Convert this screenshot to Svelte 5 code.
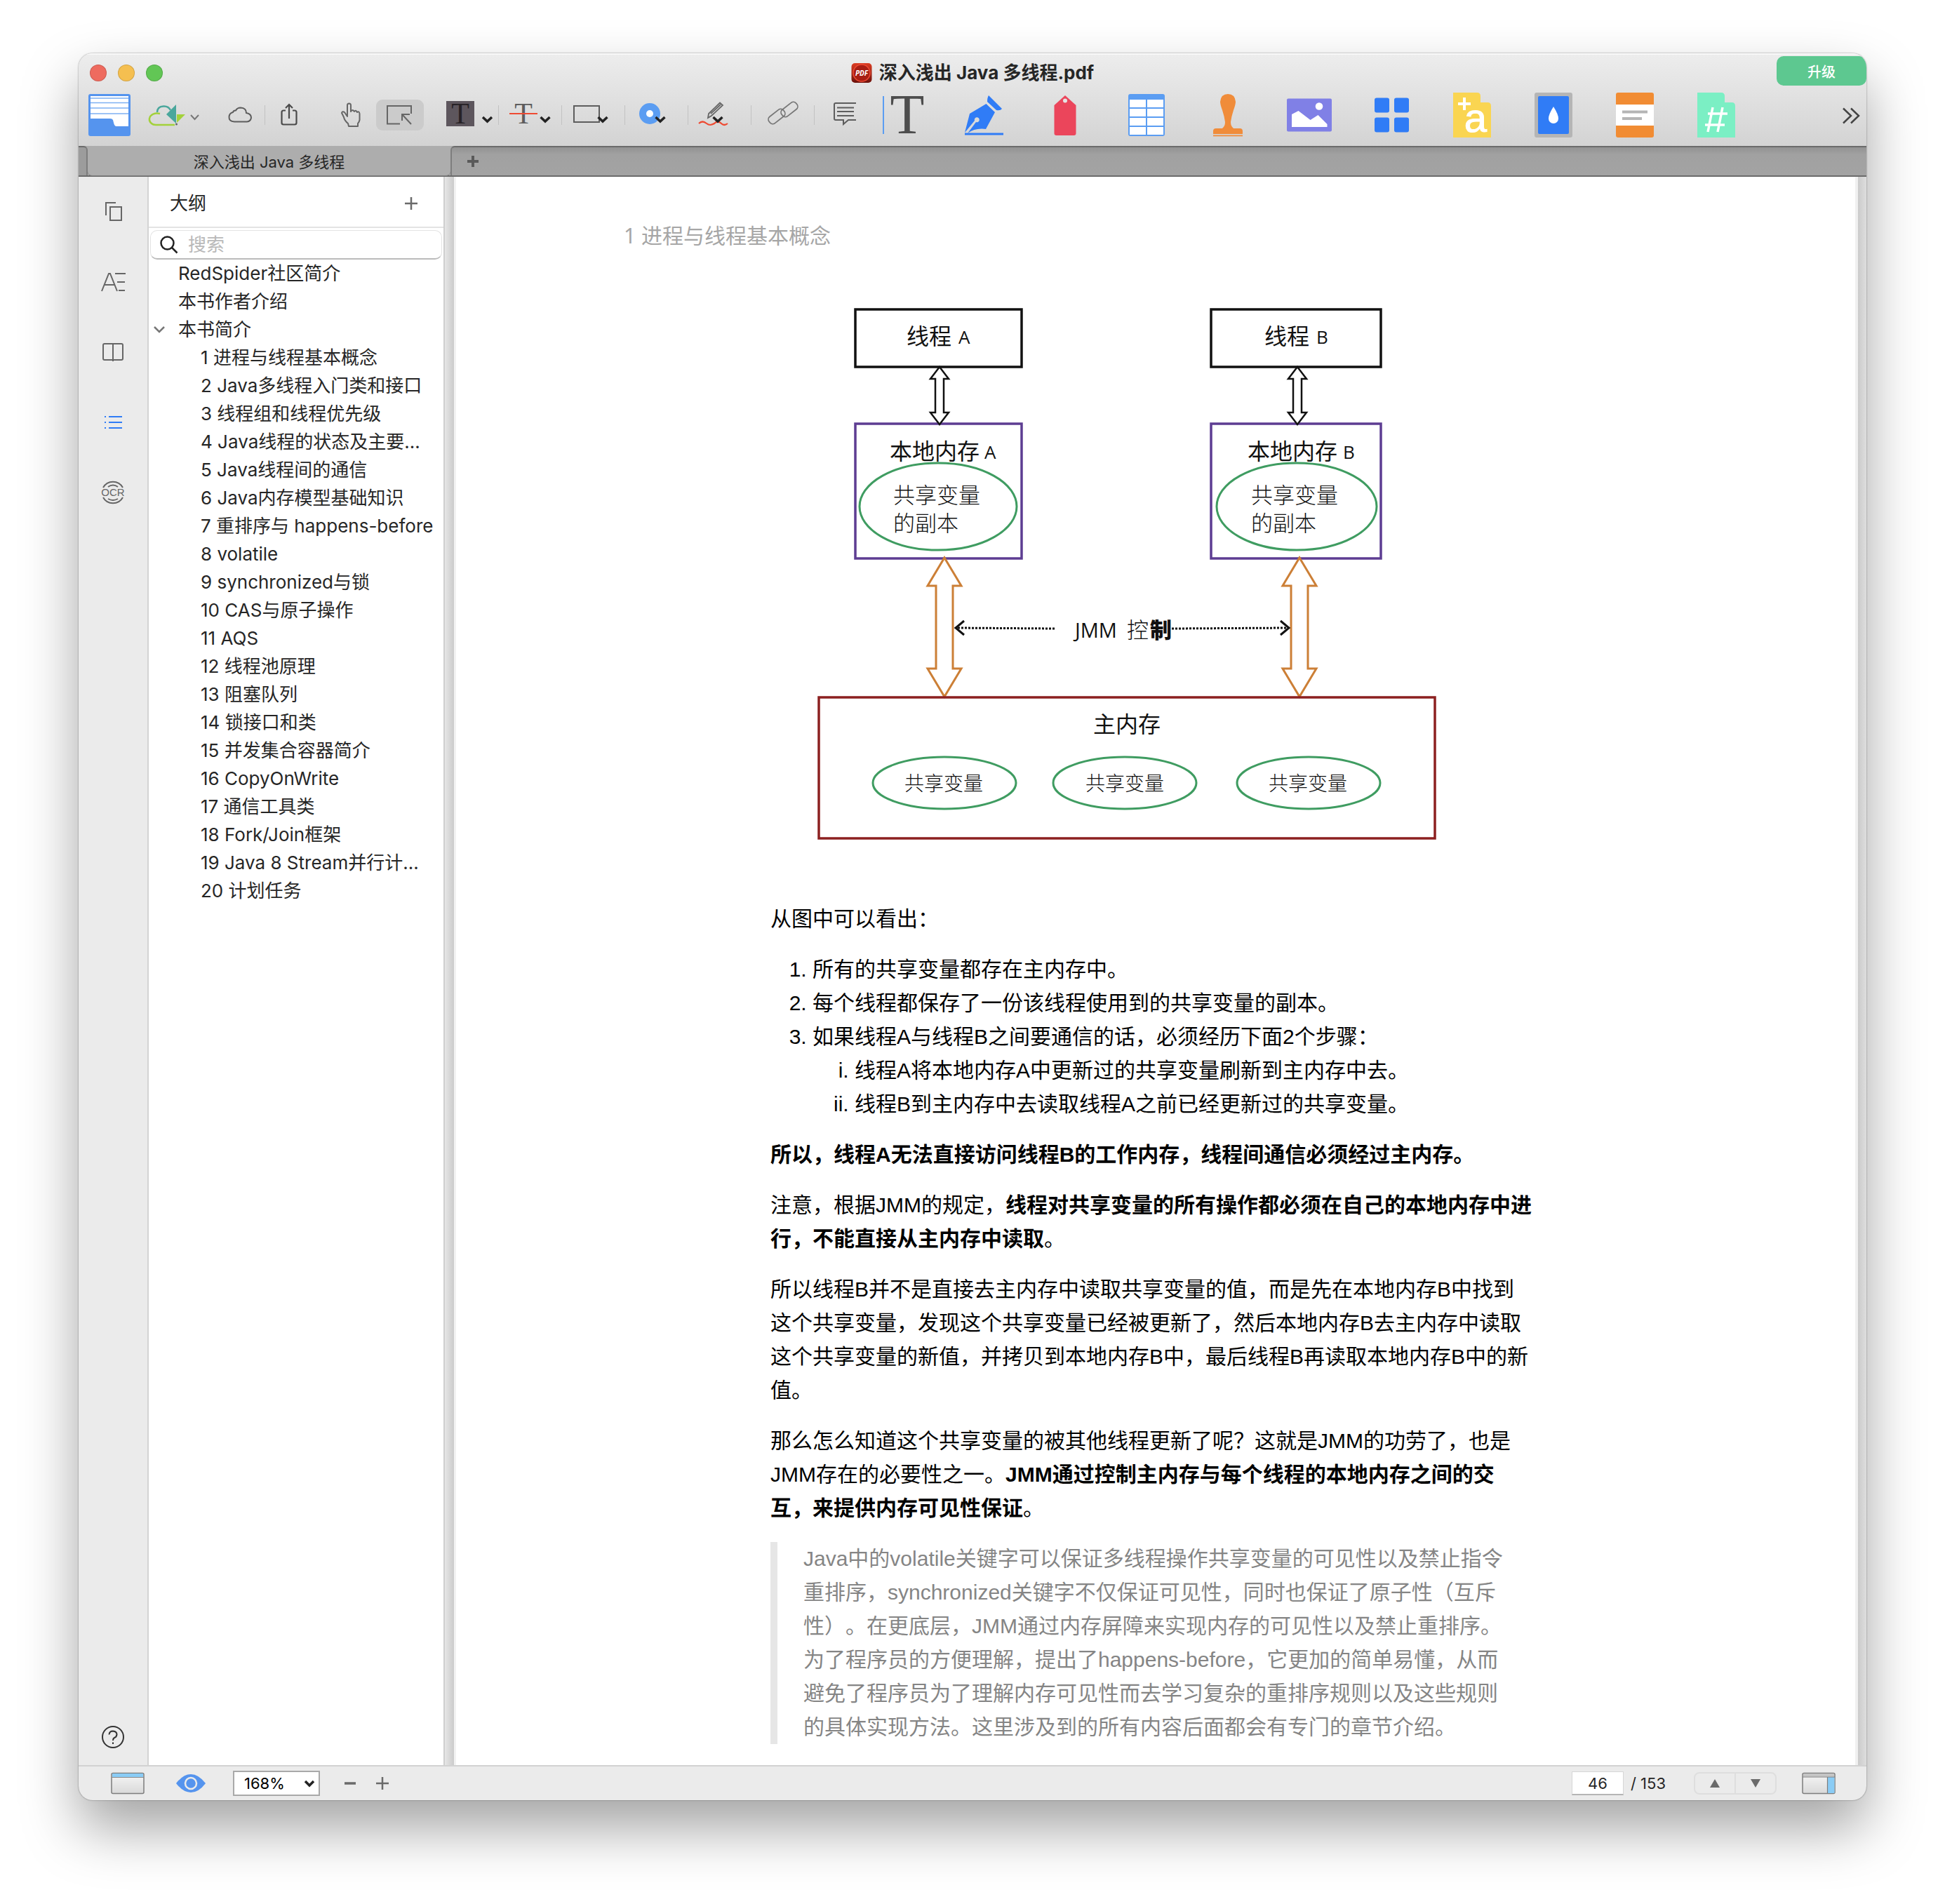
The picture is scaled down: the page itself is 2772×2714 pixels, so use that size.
<script>
  const outline = [
    { text: 'RedSpider社区简介', level: 1 },
    { text: '本书作者介绍', level: 1 },
    { text: '本书简介', level: 1, open: true },
    { text: '1 进程与线程基本概念', level: 2 },
    { text: '2 Java多线程入门类和接口', level: 2 },
    { text: '3 线程组和线程优先级', level: 2 },
    { text: '4 Java线程的状态及主要…', level: 2 },
    { text: '5 Java线程间的通信', level: 2 },
    { text: '6 Java内存模型基础知识', level: 2 },
    { text: '7 重排序与 happens-before', level: 2 },
    { text: '8 volatile', level: 2 },
    { text: '9 synchronized与锁', level: 2 },
    { text: '10 CAS与原子操作', level: 2 },
    { text: '11 AQS', level: 2 },
    { text: '12 线程池原理', level: 2 },
    { text: '13 阻塞队列', level: 2 },
    { text: '14 锁接口和类', level: 2 },
    { text: '15 并发集合容器简介', level: 2 },
    { text: '16 CopyOnWrite', level: 2 },
    { text: '17 通信工具类', level: 2 },
    { text: '18 Fork/Join框架', level: 2 },
    { text: '19 Java 8 Stream并行计…', level: 2 },
    { text: '20 计划任务', level: 2 }
  ];
  const threads = [
    { name: 'A', left: 1220, width: 237, labelX: 1293, memX: 1269, letterX: 1367, memLetterX: 1404, arrow: 1340, cx: 1338, rx: 112, textX: 1274, bus: 1347 },
    { name: 'B', left: 1727, width: 242, labelX: 1803, memX: 1779, letterX: 1877, memLetterX: 1915, arrow: 1850, cx: 1849, rx: 114, textX: 1784, bus: 1853 }
  ];
  const shared = [
    { cx: 1347, x: 1290 },
    { cx: 1604, x: 1548 },
    { cx: 1866, x: 1809 }
  ];
  let zoom = $state('168%');
  let page = $state('46');
</script>

<div class="desktop">
  <div class="window">
    <header class="chrome">
      <div class="titlebar">
        <div class="lights">
          <button class="light red" aria-label="关闭"></button>
          <button class="light yellow" aria-label="最小化"></button>
          <button class="light green" aria-label="缩放"></button>
        </div>
        <div class="title">
          <svg width="30" height="30" viewBox="0 0 30 30" aria-hidden="true">
            <defs>
              <linearGradient id="pdf" x1="0" y1="0" x2="0" y2="1">
                <stop offset="0" stop-color="#dc3c22" />
                <stop offset="1" stop-color="#6d120c" />
              </linearGradient>
            </defs>
            <rect x="0.5" y="1" width="29" height="28" rx="5" fill="url(#pdf)" />
            <circle cx="15" cy="15" r="12" fill="#a81e13" stroke="#ef4a35" stroke-width="1.5" />
            <text x="15" y="19" text-anchor="middle" class="pdf">PDF</text>
          </svg>
          <span>深入浅出 Java 多线程.pdf</span>
        </div>
        <button class="upgrade">升级</button>
      </div>

      <div class="toolbar">
        <button class="tool" aria-label="文件夹">
          <svg width="88" height="72" viewBox="112 128 88 72">
            <rect x="126" y="134" width="60" height="60" rx="3" fill="#5594ee" />
            <path d="M129 137H183V180H166Q163 180 162 175L161 171Q160 169 157 169H129Z" fill="#fff" />
            <path d="M129 140H183M129 146.500H183M129 154H183M129 162H183" stroke="#7eb0f2" stroke-width="1.500" />
          </svg>
        </button>
        <button class="tool" aria-label="云端同步">
          <svg width="96" height="72" viewBox="200 128 96 72" fill="none">
            <path d="M228 162Q219 160 214 166Q211 172 216 176Q218 178 222 178H249" stroke="#a3d13b" stroke-width="2.500" />
            <path d="M224 160Q224 152 233 151.500Q240 151 243 157" stroke="#4aa79c" stroke-width="2.500" />
            <path d="M251 149V176L237 163Z" fill="#4aa79c" />
            <path d="M252 163H264L252 175Z" fill="#a3d13b" />
            <circle cx="251.500" cy="177" r="1.500" fill="#666" />
            <path d="M272 164L277.500 170L283 164" stroke="#777" stroke-width="2" />
          </svg>
        </button>
        <button class="tool" aria-label="云">
          <svg width="81" height="72" viewBox="296 128 81 72" fill="none" stroke="#5d5d5d" stroke-width="2">
            <path d="M334 173.500Q326 173 326.500 166.500Q327 161 332 160Q333 157 336 157.500Q338 153.500 343 153.500Q351 154 351 161Q358 162 358 168Q357 173 352 173.500Z" />
          </svg>
        </button>
        <span class="sep"></span>
        <button class="tool" aria-label="分享">
          <svg width="83" height="72" viewBox="378 128 83 72" fill="none" stroke="#4a4a4a" stroke-width="2.200">
            <path d="M407 157.500H404Q401.500 157.500 401.500 160V175Q401.500 177.500 404 177.500H420Q422.500 177.500 422.500 175V160Q422.500 157.500 420 157.500H417M412 169V149M407 154L412 149L417 154" />
          </svg>
        </button>
        <button class="tool" aria-label="手型">
          <svg width="71" height="72" viewBox="461 128 71 72" fill="none" stroke="#666" stroke-width="2" stroke-linejoin="round">
            <path d="M496 176Q491 172 490 167L487 161Q488 158 491 160L495 166V150Q495 147.500 497.500 147.500Q500 147.500 500 150V159Q502 155 505 159Q507 156 509 160Q512 158 512.500 162V171Q512 174 510 176V180H497Z" />
          </svg>
        </button>
        <button class="tool" aria-label="选择">
          <svg width="80" height="72" viewBox="532 128 80 72" fill="none" stroke="#666" stroke-width="2">
            <rect x="536" y="142" width="68" height="44" rx="9" fill="#cbcbcb" stroke="none" />
            <path d="M570 176.500H552V151H586V162M586 177L573 163M573 172V163H584" />
          </svg>
        </button>
        <button class="tool" aria-label="高亮">
          <svg width="98" height="72" viewBox="612 128 98 72">
            <rect x="636" y="144" width="40" height="36" fill="#5d565d" />
            <text x="656" y="176" text-anchor="middle" class="tee small dark">T</text>
            <path d="M688 167L694.500 173L701 167" class="drop" />
          </svg>
        </button>
        <span class="sep"></span>
        <button class="tool" aria-label="删除线">
          <svg width="89" height="72" viewBox="711 128 89 72">
            <text x="746" y="176" text-anchor="middle" class="tee small">T</text>
            <path d="M726 162H766" stroke="#ee4a32" stroke-width="2.200" />
            <path d="M770.500 167L777 173L783.500 167" class="drop" />
          </svg>
        </button>
        <span class="sep"></span>
        <button class="tool" aria-label="矩形">
          <svg width="89" height="72" viewBox="801 128 89 72">
            <rect x="818" y="151" width="36" height="23" fill="none" stroke="#5d5d5d" stroke-width="2" />
            <path d="M852.500 167L859 173L865.500 167" class="drop" />
          </svg>
        </button>
        <span class="sep"></span>
        <button class="tool" aria-label="颜色">
          <svg width="89" height="72" viewBox="891 128 89 72">
            <circle cx="926" cy="162" r="15" fill="#5b9df2" />
            <circle cx="926" cy="162" r="5" fill="#fff" />
            <path d="M934.500 167L941 173L947.500 167" class="drop" />
          </svg>
        </button>
        <span class="sep"></span>
        <button class="tool" aria-label="画笔">
          <svg width="89" height="72" viewBox="981 128 89 72" fill="none">
            <path d="M1009 168L1010 162L1026 146.500L1030 150L1014 165ZM1013 162L1027 149" stroke="#666" stroke-width="1.800" />
            <path d="M996 176Q1001 171 1007 176Q1012 180 1018 176Q1023 171 1028 176Q1032 180 1037 176" stroke="#ee4a32" stroke-width="2.200" />
            <path d="M1016.500 167L1023 173L1029.500 167" class="drop" />
          </svg>
        </button>
        <span class="sep"></span>
        <button class="tool" aria-label="链接">
          <svg width="89" height="72" viewBox="1071 128 89 72" fill="none" stroke="#777" stroke-width="1.800">
            <rect x="-13" y="-6" width="26" height="12" rx="5" transform="translate(1125 156) rotate(-38)" />
            <rect x="-13" y="-6" width="26" height="12" rx="5" transform="translate(1107 166) rotate(-38)" />
          </svg>
        </button>
        <span class="sep"></span>
        <button class="tool" aria-label="批注">
          <svg width="67" height="72" viewBox="1161 128 67 72" fill="none" stroke="#5d5d5d" stroke-width="2">
            <path d="M1220 147H1191Q1189 147 1189 149V169Q1189 171 1191 171H1202V177L1209 171H1220M1193 153.500H1217M1193 159H1217M1193 165H1217" />
          </svg>
        </button>
        <button class="tool" aria-label="文本">
          <svg width="116" height="72" viewBox="1228 128 116 72">
            <path d="M1259 137V191" stroke="#5b9df2" stroke-width="2" />
            <text x="1293" y="190" text-anchor="middle" class="tee">T</text>
          </svg>
        </button>
        <button class="tool" aria-label="签名">
          <svg width="116" height="72" viewBox="1344 128 116 72">
            <path d="M1409 136L1428 155Q1426 158 1420 157L1407 145Q1407 139 1409 136Z" fill="#307cf6" />
            <path d="M1405.500 148L1418 160L1405 184Q1390 182 1379 190L1391 174A3.500 3.500 0 1 0 1389 172L1375 189L1382 162Z" fill="#307cf6" />
            <path d="M1375 191H1430" stroke="#307cf6" stroke-width="3.200" />
          </svg>
        </button>
        <button class="tool" aria-label="标签">
          <svg width="116" height="72" viewBox="1460 128 116 72">
            <path d="M1518 136L1533.500 150V190Q1533.500 193 1530.500 193H1505.500Q1502.500 193 1502.500 190V150Z" fill="#eb455b" />
            <circle cx="1518" cy="143.500" r="3" fill="#e4e4e4" />
          </svg>
        </button>
        <button class="tool" aria-label="表格">
          <svg width="116" height="72" viewBox="1576 128 116 72">
            <rect x="1608" y="134" width="52" height="60" rx="3" fill="#5b9df2" />
            <path d="M1610 142h23v11h-23zM1635 142h23v11h-23zM1610 155h23v11h-23zM1635 155h23v11h-23zM1610 168h23v11h-23zM1635 168h23v11h-23zM1610 181h23v11h-23zM1635 181h23v11h-23z" fill="#fff" />
          </svg>
        </button>
        <button class="tool" aria-label="图章">
          <svg width="116" height="72" viewBox="1692 128 116 72" fill="#f08c3a">
            <path d="M1750 134Q1760 134 1761 145Q1761 149 1758 157Q1755 166 1754 174Q1754 180 1758 183H1767Q1771 183 1771 187V191H1729V187Q1729 183 1733 183H1742Q1746 180 1746 174Q1745 166 1742 157Q1739 149 1739 145Q1740 134 1750 134Z" />
            <rect x="1729" y="192.500" width="42" height="1.800" />
          </svg>
        </button>
        <button class="tool" aria-label="图片">
          <svg width="116" height="72" viewBox="1808 128 116 72">
            <rect x="1834" y="140.500" width="64" height="47" rx="2" fill="#8080e6" />
            <circle cx="1880" cy="151.500" r="5.300" fill="#fff" />
            <path d="M1841 163L1850.500 158L1867.500 171L1878.500 164L1891.500 177V181H1841Z" fill="#fff" />
          </svg>
        </button>
        <button class="tool" aria-label="页面">
          <svg width="116" height="72" viewBox="1924 128 116 72" fill="#307cf6">
            <rect x="1959" y="139.500" width="21" height="21" rx="3" />
            <rect x="1987" y="139.500" width="21" height="21" rx="3" />
            <rect x="1959" y="167.500" width="21" height="21" rx="3" />
            <rect x="1987" y="167.500" width="21" height="21" rx="3" />
          </svg>
        </button>
        <button class="tool" aria-label="页眉文字">
          <svg width="116" height="72" viewBox="2040 128 116 72">
            <path d="M2071 132H2105Q2110 132 2110 137V146H2120Q2125 146 2125 151V196H2071Z" fill="#fad551" />
            <path d="M2078 148H2096M2087 139V157" stroke="#fff" stroke-width="4" />
            <text x="2103" y="188" text-anchor="middle" class="letter">a</text>
          </svg>
        </button>
        <button class="tool" aria-label="水印">
          <svg width="116" height="72" viewBox="2156 128 116 72">
            <rect x="2187" y="132" width="54" height="64" rx="3" fill="#b5b5b5" />
            <rect x="2192" y="137" width="44" height="54" rx="2" fill="#307cf6" />
            <path d="M2214 152Q2221 163 2221 169A7 7 0 0 1 2207 169Q2207 163 2214 152Z" fill="#fff" />
          </svg>
        </button>
        <button class="tool" aria-label="页眉页脚">
          <svg width="116" height="72" viewBox="2272 128 116 72">
            <rect x="2303" y="132" width="54" height="64" rx="3" fill="#f18c33" />
            <rect x="2303" y="149" width="54" height="30" fill="#fff" />
            <path d="M2312 159.500H2348M2312 169H2340" stroke="#b5b5b5" stroke-width="4" />
          </svg>
        </button>
        <button class="tool" aria-label="页码">
          <svg width="116" height="72" viewBox="2388 128 116 72">
            <path d="M2419 132H2453Q2458 132 2458 137V146H2468Q2473 146 2473 151V196H2419Z" fill="#7befc4" />
            <path d="M2441 153L2434 188M2455 153L2448 188M2434 162H2462M2430 178H2458" stroke="#fff" stroke-width="3.500" fill="none" />
          </svg>
        </button>
        <button class="tool more" aria-label="更多工具">
          <svg width="44" height="72" viewBox="2616 128 44 72" fill="none" stroke="#444" stroke-width="2.500">
            <path d="M2627 154.500L2638 165L2627 175.500M2638 154.500L2649 165L2638 175.500" />
          </svg>
        </button>
      </div>
    </header>

    <div class="tabs">
      <span class="tab-edge"></span>
      <button class="tab">深入浅出 Java 多线程</button>
      <div class="tab-rest">
        <button class="tab-add" aria-label="新建标签页">
          <svg width="16" height="16" viewBox="0 0 16 16"><path d="M8 0V16M0 8H16" stroke="#5a5a5a" stroke-width="4" /></svg>
        </button>
      </div>
    </div>

    <div class="body">
      <nav class="rail">
        <button class="rail-item" aria-label="缩略图">
          <svg width="36" height="36" viewBox="0 0 36 36"><path d="M22 5H8V23M14 11H30V30H14Z" /></svg>
        </button>
        <button class="rail-item" aria-label="批注列表">
          <svg width="36" height="36" viewBox="0 0 36 36"><path d="M2 31L12 6H14L24 31M6 22H20M21 6H36M24 18H35M26 30H35" /></svg>
        </button>
        <button class="rail-item" aria-label="书签">
          <svg width="36" height="36" viewBox="0 0 36 36"><rect x="4" y="6" width="28" height="23" rx="2" /><path d="M18 6V31" /></svg>
        </button>
        <button class="rail-item active" aria-label="大纲">
          <svg width="36" height="36" viewBox="0 0 36 36"><path d="M6 10H8M6 18H8M6 26H8M12 10H31M12 18H31M12 26H31" /></svg>
        </button>
        <button class="rail-item" aria-label="文字识别">
          <svg width="36" height="36" viewBox="0 0 36 36">
            <path d="M4 11A16 16 0 0 1 32 11M11 10Q18 5 25 10M4 25A16 16 0 0 0 32 25M11 27Q18 31 25 27" />
            <text x="18" y="23" text-anchor="middle" class="ocr">OCR</text>
          </svg>
        </button>
        <button class="rail-item help" aria-label="帮助">
          <svg width="36" height="36" viewBox="0 0 36 36"><circle cx="18" cy="18" r="15" /><path d="M12.500 14.500Q13 9.500 18 9.500Q23.500 10 23.500 14.500Q23 18 20 19Q18 20 18 23M18 25.500V28" /></svg>
        </button>
      </nav>

      <aside class="outline">
        <div class="outline-head">
          <h2>大纲</h2>
          <button class="icon-button" aria-label="添加大纲">
            <svg width="18" height="18" viewBox="0 0 18 18"><path d="M9 0V18M0 9H18" stroke="#6a6a6a" stroke-width="2.500" /></svg>
          </button>
        </div>
        <div class="search">
          <svg width="26" height="26" viewBox="0 0 26 26" fill="none" stroke="#222" stroke-width="2.500"><circle cx="10.500" cy="10.500" r="9" /><path d="M17 17L24.500 24.500" /></svg>
          <input type="text" placeholder="搜索" aria-label="搜索" />
        </div>
        <ul class="tree">
          {#each outline as item}
            <li class="row" class:child={item.level === 2}>
              {#if item.open}
                <svg class="disclosure" width="16" height="10" viewBox="0 0 16 10"><path d="M1 1L8 8L15 1" fill="none" stroke="#777" stroke-width="2.500" /></svg>
              {/if}
              <a href="#page">{item.text}</a>
            </li>
          {/each}
        </ul>
      </aside>

      <div class="splitter"></div>

      <main class="page" id="page">
        <div class="sheet">
          <h1>1 进程与线程基本概念</h1>
          <article>
            <svg class="diagram" width="886" height="762" viewBox="1164 438 886 762" fill="none" role="img" aria-label="Java 内存模型抽象示意图">
              {#each threads as t}
                <rect x={t.left} y="442" width={t.width} height="82" stroke="#111" stroke-width="3.500" />
                <text x={t.labelX} y="492" class="label">线程</text>
                <text x={t.letterX} y="491" class="latin">{t.name}</text>
                <rect x={t.left} y="605" width={t.width} height="192" stroke="#5d3d92" stroke-width="3.500" />
                <text x={t.memX} y="656" class="label">本地内存</text>
                <text x={t.memLetterX} y="655" class="latin">{t.name}</text>
                <ellipse cx={t.cx} cy="723" rx={t.rx} ry="62" stroke="#3f9c61" stroke-width="3" />
                <text x={t.textX} y="718" class="thin">共享变量</text>
                <text x={t.textX} y="758" class="thin">的副本</text>
                <path transform="translate({t.arrow} 524)" d="M0 0L13 17H6V65H13L0 82L-13 65H-6V17H-13Z" stroke="#111" stroke-width="2.500" fill="#fff" />
                <path transform="translate({t.bus} 796)" d="M0 0L24 40H12V158H24L0 198L-24 158H-12V40H-24Z" stroke="#cc7f36" stroke-width="3" fill="#fff" />
              {/each}
              <path d="M1504 897L1366 896M1671 897L1835 896" stroke="#111" stroke-width="3" stroke-dasharray="3 2" />
              <path d="M1375 886L1363 896L1375 906M1826 886L1838 896L1826 906" stroke="#111" stroke-width="3" />
              <text x="1533" y="910" class="jmm">JMM</text>
              <text x="1607" y="910" class="thin">控</text>
              <text x="1640" y="910" class="heavy">制</text>
              <rect x="1168" y="995" width="878" height="201" stroke="#8c2020" stroke-width="3.500" />
              <text x="1559" y="1045" class="label">主内存</text>
              {#each shared as s}
                <ellipse cx={s.cx} cy="1117" rx="102" ry="37" stroke="#3f9c61" stroke-width="3" />
                <text x={s.x} y="1128" class="thin compact">共享变量</text>
              {/each}
            </svg>

            <p>从图中可以看出：</p>
            <ol>
              <li>所有的共享变量都存在主内存中。</li>
              <li>每个线程都保存了一份该线程使用到的共享变量的副本。</li>
              <li>
                如果线程A与线程B之间要通信的话，必须经历下面2个步骤：
                <ol class="roman">
                  <li>线程A将本地内存A中更新过的共享变量刷新到主内存中去。</li>
                  <li>线程B到主内存中去读取线程A之前已经更新过的共享变量。</li>
                </ol>
              </li>
            </ol>
            <p><strong>所以，线程A无法直接访问线程B的工作内存，线程间通信必须经过主内存。</strong></p>
            <p>注意，根据JMM的规定，<strong>线程对共享变量的所有操作都必须在自己的本地内存中进<br />行，不能直接从主内存中读取</strong>。</p>
            <p>所以线程B并不是直接去主内存中读取共享变量的值，而是先在本地内存B中找到<br />这个共享变量，发现这个共享变量已经被更新了，然后本地内存B去主内存中读取<br />这个共享变量的新值，并拷贝到本地内存B中，最后线程B再读取本地内存B中的新<br />值。</p>
            <p>那么怎么知道这个共享变量的被其他线程更新了呢？这就是JMM的功劳了，也是<br />JMM存在的必要性之一。<strong>JMM通过控制主内存与每个线程的本地内存之间的交<br />互，来提供内存可见性保证</strong>。</p>
            <blockquote>Java中的volatile关键字可以保证多线程操作共享变量的可见性以及禁止指令<br />重排序，synchronized关键字不仅保证可见性，同时也保证了原子性（互斥<br />性）。在更底层，JMM通过内存屏障来实现内存的可见性以及禁止重排序。<br />为了程序员的方便理解，提出了happens-before，它更加的简单易懂，从而<br />避免了程序员为了理解内存可见性而去学习复杂的重排序规则以及这些规则<br />的具体实现方法。这里涉及到的所有内容后面都会有专门的章节介绍。</blockquote>
          </article>
        </div>
      </main>
      <div class="gutter"></div>
    </div>

    <footer class="status">
      <button class="icon-button" aria-label="显示工具栏">
        <svg width="48" height="32" viewBox="0 0 48 32">
          <defs>
            <linearGradient id="pane" x1="0" y1="0" x2="0" y2="1"><stop offset="0" stop-color="#f6f6f6" /><stop offset="1" stop-color="#d9d9d9" /></linearGradient>
          </defs>
          <rect x="1" y="1.500" width="46" height="29" rx="2" fill="url(#pane)" stroke="#7d7d7d" stroke-width="1.500" />
          <path d="M2 2H46V7H2Z" fill="#8accf5" /><path d="M1 7.500H47" stroke="#8a8a8a" />
        </svg>
      </button>
      <button class="icon-button eye" aria-label="阅读模式">
        <svg width="42" height="28" viewBox="0 0 42 28">
          <path d="M0 14Q10 1 21 1Q32 1 42 14Q32 27 21 27Q10 27 0 14Z" fill="#5594ee" />
          <circle cx="21" cy="14" r="8" fill="none" stroke="#ebebeb" stroke-width="2.500" />
        </svg>
      </button>
      <div class="zoom">
        <select bind:value={zoom} aria-label="缩放比例">
          <option>100%</option>
          <option>168%</option>
          <option>200%</option>
        </select>
        <svg width="16" height="11" viewBox="0 0 16 11"><path d="M2 2L8 8L14 2" class="drop" /></svg>
      </div>
      <button class="icon-button minus" aria-label="缩小">
        <svg width="18" height="18" viewBox="0 0 18 18"><path d="M1 9H17" stroke="#6a6a6a" stroke-width="3.500" /></svg>
      </button>
      <button class="icon-button plus" aria-label="放大">
        <svg width="18" height="18" viewBox="0 0 18 18"><path d="M9 0V18M0 9H18" stroke="#6a6a6a" stroke-width="2.500" /></svg>
      </button>
      <div class="paging">
        <input type="text" bind:value={page} aria-label="页码" />
        <span>/ 153</span>
      </div>
      <div class="stepper">
        <button aria-label="上一页"><svg width="14" height="12" viewBox="0 0 14 12"><path d="M7 0L14 12H0Z" fill="#6a6a6a" /></svg></button>
        <button aria-label="下一页"><svg width="14" height="12" viewBox="0 0 14 12"><path d="M0 0H14L7 12Z" fill="#6a6a6a" /></svg></button>
      </div>
      <button class="icon-button" aria-label="显示侧栏">
        <svg width="48" height="32" viewBox="0 0 48 32">
          <rect x="1" y="1.500" width="46" height="29" rx="2" fill="url(#pane)" stroke="#7d7d7d" stroke-width="1.500" />
          <path d="M2 2H46V6.500H2Z" fill="#c4c4c4" /><path d="M37 7H46.500V30H37Z" fill="#8accf5" /><path d="M1 7H47M36.500 7V30" stroke="#7d7d7d" stroke-width="1.200" />
        </svg>
      </button>
    </footer>
  </div>
</div>

<style>
  :global(body) {
    background: #fff;
  }
  .desktop {
    display: flex;
    box-sizing: border-box;
    min-height: 100vh;
    padding: 76px 112px 148px;
    font-family: Inter, 'Noto Sans CJK SC', sans-serif;
    color: #262626;
    text-spacing-trim: space-all;
  }
  .window {
    flex: 1;
    min-width: 0;
    display: flex;
    flex-direction: column;
    border-radius: 20px;
    background: #ebebeb;
    overflow: hidden;
    box-shadow: 0 0 2px rgba(0, 0, 0, 0.5), 0 40px 80px rgba(0, 0, 0, 0.36);
  }
  button {
    padding: 0;
    border: 0;
    background: none;
    font: inherit;
    color: inherit;
  }
  svg {
    display: block;
    flex: none;
    overflow: visible;
  }
  .chrome {
    padding-bottom: 8px;
    background: linear-gradient(#ededed, #d3d3d3);
    box-shadow: inset 0 2px 0 #f8f8f8;
  }
  .titlebar {
    display: grid;
    grid-template-columns: 1fr auto 1fr;
    align-items: center;
    box-sizing: border-box;
    height: 52px;
    padding-top: 4px;
  }
  .lights {
    display: flex;
    gap: 16px;
    padding-left: 16px;
  }
  .light {
    width: 24px;
    height: 24px;
    border-radius: 50%;
    box-shadow: inset 0 0 0 1px rgba(0, 0, 0, 0.14);
  }
  .red { background: #ee6b5f; }
  .yellow { background: #f5bf50; }
  .green { background: #62c655; }
  .title {
    display: flex;
    align-items: center;
    gap: 10px;
    font-size: 26px;
    line-height: 36px;
    font-weight: 700;
  }
  .pdf {
    font: italic 700 10px 'Open Sans', sans-serif;
    fill: #fff;
  }
  .upgrade {
    justify-self: end;
    align-self: start;
    width: 128px;
    height: 42px;
    border-radius: 10px;
    background: #5dc890;
    color: #fff;
    font-size: 20px;
    font-weight: 500;
  }
  .toolbar {
    display: flex;
    align-items: center;
    height: 72px;
  }
  .tool {
    flex: none;
  }
  .more {
    margin-left: auto;
  }
  .sep {
    flex: none;
    width: 1px;
    height: 28px;
    background: #c2c2c2;
  }
  .drop {
    fill: none;
    stroke: #222;
    stroke-width: 3.5;
  }
  .tee {
    font: 80px 'Liberation Serif', serif;
    fill: #4d4d4d;
  }
  .tee.small {
    font-size: 42px;
    fill: #5d5d5d;
  }
  .tee.dark {
    fill: #262226;
  }
  .letter {
    font: 58px 'Liberation Sans', sans-serif;
    fill: #fff;
    stroke: #fff;
  }

  .tabs {
    display: flex;
    height: 44px;
    box-sizing: border-box;
    background: #adadad;
    border-bottom: 2px solid #6b6b6b;
    font-size: 22px;
  }
  .tab-edge {
    width: 13px;
    background: #9c9c9c;
    border-top: 2px solid #6b6b6b;
    border-right: 2px solid #7d7d7d;
    border-radius: 0 6px 0 0;
    box-sizing: border-box;
  }
  .tab {
    flex: none;
    width: 517px;
    color: #262626;
    box-shadow: 0 1px 0 #7d7d7d;
    border-radius: 0 0 6px 6px;
  }
  .tab-rest {
    flex: 1;
    display: flex;
    align-items: center;
    padding-left: 22px;
    border-top: 2px solid #6b6b6b;
    border-left: 2px solid #7d7d7d;
    border-radius: 6px 0 0 0;
    background: linear-gradient(#929292, #a1a1a1 10px, #a3a3a3);
  }

  .body {
    flex: 1;
    display: grid;
    grid-template-columns: 100px 420px 18px minmax(0, 1fr) 16px;
  }
  .rail {
    display: flex;
    flex-direction: column;
    align-items: center;
    gap: 64px;
    padding: 32px 0 22px;
    border-right: 2px solid #d4d4d4;
  }
  .rail-item svg {
    fill: none;
    stroke: #666;
    stroke-width: 2;
  }
  .rail-item.active svg {
    stroke: #307cf6;
  }
  .rail-item.help {
    margin-top: auto;
  }
  .rail-item.help svg {
    stroke: #333;
  }
  .ocr {
    font: 15px 'Liberation Sans', sans-serif;
    fill: #666;
    stroke: none;
  }

  .outline {
    background: #fff;
  }
  .outline-head {
    display: flex;
    align-items: center;
    justify-content: space-between;
    box-sizing: border-box;
    height: 73px;
    padding: 4px 37px 0 30px;
    border-bottom: 2px solid #e3e3e3;
  }
  h2 {
    margin: 0;
    font-size: 26px;
    font-weight: 400;
    line-height: 36px;
  }
  .search {
    display: flex;
    align-items: center;
    gap: 14px;
    box-sizing: border-box;
    height: 42px;
    margin: 3px 2px 0;
    padding-left: 13px;
    border: 1px solid #e3e3e3;
    border-bottom: 2px solid #bbb;
    border-radius: 10px;
  }
  .search input {
    flex: 1;
    min-width: 0;
    padding: 0;
    border: 0;
    outline: 0;
    background: none;
    font: inherit;
    font-size: 26px;
  }
  .search input::placeholder {
    color: #b9b9b9;
  }
  .tree {
    margin: 0;
    padding: 0;
    list-style: none;
  }
  .row {
    display: flex;
    align-items: center;
    position: relative;
    height: 40px;
    padding-left: 42px;
    font-size: 26px;
    line-height: 40px;
    white-space: nowrap;
  }
  .row.child {
    padding-left: 74px;
  }
  .row a {
    color: inherit;
    text-decoration: none;
  }
  .disclosure {
    position: absolute;
    left: 7px;
  }

  .splitter {
    box-sizing: border-box;
    border-left: 2px solid #cfcfcf;
    border-right: 3px solid #f2f2f2;
    background: linear-gradient(90deg, #e6e6e6, #cbcbcb);
  }
  .gutter {
    border-left: 4px solid #f0f0f0;
    background: linear-gradient(90deg, #cbcbcb, #dedede);
  }
  .page {
    background: #fff;
    padding: 60px 0 20px;
    font-family: 'Liberation Sans', 'Noto Sans CJK SC', sans-serif;
  }
  .sheet {
    max-width: 1516px;
    margin: 0 auto;
  }
  h1 {
    margin: 0;
    font-family: 'Noto Sans', 'Noto Sans CJK SC', sans-serif;
    font-size: 30px;
    font-weight: 400;
    line-height: 48px;
    color: #a6a6a6;
  }
  article {
    max-width: 1098px;
    margin: 77px auto 0;
    font-size: 30px;
    line-height: 48px;
    color: #000;
  }
  .diagram {
    margin: 0 0 87px 65px;
  }
  .diagram text {
    fill: #111;
    font-family: 'Noto Sans CJK SC', sans-serif;
  }
  .diagram .label {
    font-size: 32px;
  }
  .diagram .latin {
    font-family: 'Open Sans', sans-serif;
    font-size: 26px;
  }
  .diagram .jmm {
    font-family: 'Open Sans', sans-serif;
    font-size: 29px;
  }
  .diagram .thin {
    font-size: 31px;
    font-weight: 300;
  }
  .diagram .compact {
    font-size: 28px;
  }
  .diagram .heavy {
    font-size: 31px;
    font-weight: 900;
  }
  p,
  ol {
    margin: 0 0 24px;
  }
  ol {
    padding-left: 60px;
  }
  .roman {
    margin: 0;
    list-style: lower-roman;
  }
  strong {
    font-weight: 700;
  }
  blockquote {
    margin: 0;
    padding-left: 37px;
    border-left: 10px solid #e6e6e6;
    color: #858585;
  }

  .status {
    display: flex;
    align-items: center;
    box-sizing: border-box;
    height: 50px;
    padding: 0 44px 0 46px;
    border-top: 2px solid #d2d2d2;
    font-size: 22px;
  }
  .eye {
    margin-left: 45px;
  }
  .zoom {
    position: relative;
    margin-left: 39px;
  }
  .zoom select {
    display: block;
    box-sizing: border-box;
    width: 124px;
    height: 36px;
    padding: 0 30px 0 14px;
    border: 2px solid #a9a9a9;
    border-radius: 0;
    background: #fff;
    color: #000;
    font: inherit;
    appearance: none;
  }
  .zoom svg {
    position: absolute;
    right: 7px;
    top: 13px;
    pointer-events: none;
  }
  .minus {
    margin-left: 34px;
  }
  .plus {
    margin-left: 28px;
  }
  .paging {
    display: flex;
    align-items: center;
    gap: 10px;
    margin-left: auto;
  }
  .paging input {
    box-sizing: border-box;
    width: 74px;
    height: 34px;
    padding: 0;
    border: 1px solid #d6d6d6;
    border-bottom: 2px solid #b5b5b5;
    background: #fff;
    font: inherit;
    color: inherit;
    text-align: center;
  }
  .stepper {
    display: flex;
    box-sizing: border-box;
    width: 118px;
    height: 32px;
    margin: 0 36px 0 40px;
    border: 2px solid #dedede;
    border-radius: 8px;
  }
  .stepper button {
    flex: 1;
    display: flex;
    align-items: center;
    justify-content: center;
  }
  .stepper button + button {
    border-left: 2px solid #dedede;
  }
</style>
